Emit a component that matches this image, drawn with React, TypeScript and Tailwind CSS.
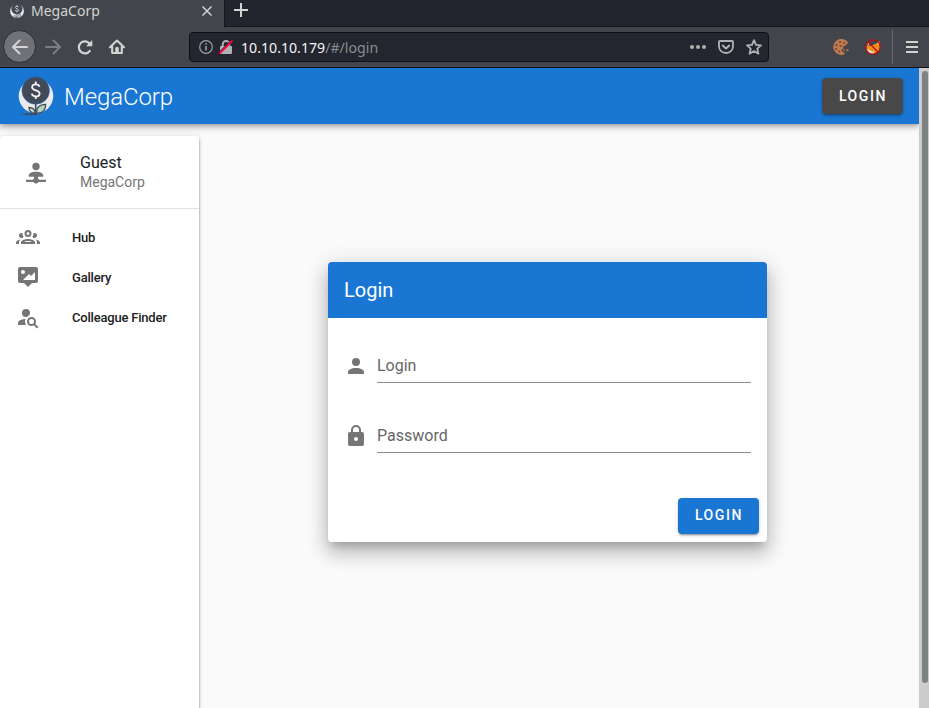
import type { ReactNode } from "react";

const PATHS = {
  account:
    "M12,4A4,4 0 0,1 16,8A4,4 0 0,1 12,12A4,4 0 0,1 8,8A4,4 0 0,1 12,4M12,14C16.42,14 20,15.79 20,18V20H4V18C4,15.79 7.58,14 12,14Z",
  lock: "M12,17A2,2 0 0,0 14,15C14,13.89 13.1,13 12,13A2,2 0 0,0 10,15A2,2 0 0,0 12,17M18,8A2,2 0 0,1 20,10V20A2,2 0 0,1 18,22H6A2,2 0 0,1 4,20V10C4,8.89 4.9,8 6,8H7V6A5,5 0 0,1 12,1A5,5 0 0,1 17,6V8H18M12,3A3,3 0 0,0 9,6V8H15V6A3,3 0 0,0 12,3Z",
  network:
    "M14,15.7V17.6A2.3,2.3 0 0,1 15,18.8H22V21H14.6A3,3 0 0,1 9.4,21H2V18.8H9A2.3,2.3 0 0,1 10,17.6V15.7H4.7V14.5C4.7,12.3 8,10.7 12,10.7C16,10.7 19.3,12.3 19.3,14.5V15.7H14M12,1.8A3.7,3.7 0 0,1 15.7,5.5A3.7,3.7 0 0,1 12,9.2A3.7,3.7 0 0,1 8.3,5.5A3.7,3.7 0 0,1 12,1.8Z",
  group:
    "M12,5A3.5,3.5 0 0,0 8.5,8.5A3.5,3.5 0 0,0 12,12A3.5,3.5 0 0,0 15.5,8.5A3.5,3.5 0 0,0 12,5M12,7A1.5,1.5 0 0,1 13.5,8.5A1.5,1.5 0 0,1 12,10A1.5,1.5 0 0,1 10.5,8.5A1.5,1.5 0 0,1 12,7M5.5,8A2.5,2.5 0 0,0 3,10.5C3,11.44 3.53,12.25 4.29,12.68C4.65,12.88 5.06,13 5.5,13C5.94,13 6.35,12.88 6.71,12.68C7.08,12.47 7.39,12.17 7.62,11.81C6.89,10.86 6.5,9.7 6.5,8.5C6.5,8.41 6.5,8.31 6.5,8.22C6.2,8.08 5.86,8 5.5,8M18.5,8C18.14,8 17.8,8.08 17.5,8.22C17.5,8.31 17.5,8.41 17.5,8.5C17.5,9.7 17.11,10.86 16.38,11.81C16.5,12 16.63,12.15 16.78,12.3C16.94,12.45 17.1,12.58 17.29,12.68C17.65,12.88 18.06,13 18.5,13C18.94,13 19.35,12.88 19.71,12.68C20.47,12.25 21,11.44 21,10.5A2.5,2.5 0 0,0 18.5,8M12,14C9.66,14 5,15.17 5,17.5V19H19V17.5C19,15.17 14.34,14 12,14M4.71,14.55C2.78,14.78 0,15.76 0,17.5V19H3V17.07C3,16.06 3.69,15.22 4.71,14.55M19.29,14.55C20.31,15.22 21,16.06 21,17.07V19H24V17.5C24,15.76 21.22,14.78 19.29,14.55M12,16C13.53,16 15.24,16.5 16.23,17H7.77C8.76,16.5 10.47,16 12,16Z",
  gallery:
    "M4,2H20A2,2 0 0,1 22,4V16A2,2 0 0,1 20,18H16L12,22L8,18H4A2,2 0 0,1 2,16V4A2,2 0 0,1 4,2M19,15V7L15,11L13,9L7,15H19M7,5A2,2 0 0,0 5,7A2,2 0 0,0 7,9A2,2 0 0,0 9,7A2,2 0 0,0 7,5Z",
  search:
    "M10,4A4,4 0 0,1 14,8C14,8.91 13.69,9.75 13.18,10.43C12.32,10.75 11.55,11.26 10.91,11.9L10,12A4,4 0 0,1 6,8A4,4 0 0,1 10,4M2,20V18C2,15.88 5.31,14.14 9.5,14C9.18,14.78 9,15.62 9,16.5C9,17.79 9.38,19 10,20H2M15.5,12C18,12 20,14 20,16.5C20,17.38 19.75,18.21 19.31,18.9L22.39,22L21,23.39L17.88,20.32C17.19,20.75 16.37,21 15.5,21C13,21 11,19 11,16.5C11,14 13,12 15.5,12M15.5,14A2.5,2.5 0 0,0 13,16.5A2.5,2.5 0 0,0 15.5,19A2.5,2.5 0 0,0 18,16.5A2.5,2.5 0 0,0 15.5,14Z",
};

function Mdi({ d }: { d: string }) {
  return (
    <svg className="size-6 shrink-0 fill-[#757575]" viewBox="0 0 24 24">
      <path d={d} />
    </svg>
  );
}

function Logo({ className, page }: { className: string; page?: boolean }) {
  return (
    <svg className={className} viewBox="0 0 36 40">
      <circle cx="18" cy="20" r="17.3" fill="#ebebeb" />
      <circle cx="17.700" cy="14.500" r="13.800" fill="#434a57" stroke={page ? "#1976d2" : "#41444b"} strokeWidth="0.5" />
      <path d="M17.700 28v10M3.500 38.200h1.200M6.500 38.200H18.500" stroke="#434a57" strokeWidth="1.600" fill="none" />
      <path d="M19 37.300c-1.200-5.500 2.500-9 8.700-9 0 5.500-3 9-8.700 9Z" fill="#b4d3c8" stroke="#434a57" strokeWidth="1.300" />
      <path d="M17 37.300c.3-3.500-2-5.800-6-5.800 0 3.500 2.200 5.800 6 5.800Z" fill="#b4d3c8" stroke="#434a57" strokeWidth="1.300" />
      <path
        d="M21.500 10.700c-.4-1.500-1.800-2.400-3.700-2.400-2.200 0-3.700 1.100-3.700 2.900 0 4 7.500 2.200 7.500 6.200 0 1.900-1.600 3-3.800 3-2.300 0-3.700-1-4-2.700M17.700 5.500v2.800M17.700 20v3"
        fill="none"
        stroke="#f4f4f4"
        strokeWidth="1.800"
      />
    </svg>
  );
}

function BrowserChrome() {
  return (
    <div className="flex h-[68px] flex-col border-b border-[#101116] bg-[#42454b] font-['Noto_Sans',sans-serif] text-[#d3d3d1]">
      <div className="flex h-[26px] shrink-0">
        <div className="flex h-[26px] w-[224px] items-center pb-1 pl-[9px]">
          <Logo className="h-4 w-4" />
          <span className="ml-1.5 text-[14px] leading-5">MegaCorp</span>
          <svg className="ml-auto mr-[11px] size-3" viewBox="0 0 12 12" fill="none" stroke="currentColor" strokeWidth="1.500">
            <path d="M1.500 1.500l9 9M10.500 1.500l-9 9" />
          </svg>
        </div>
        <div className="flex h-[27px] flex-1 border-b border-l border-[#15161c] bg-[#23252e] pl-[9px] pt-[3px]">
          <svg className="size-[14px]" viewBox="0 0 14 14" stroke="currentColor" strokeWidth="2">
            <path d="M7 0v14M0 7h14" />
          </svg>
        </div>
      </div>
      <div className="flex h-[41px] items-center pl-[3px]">
        <div className="flex size-[33px] items-center justify-center rounded-full border border-[#2d2f34] bg-[#717277]">
          <svg className="size-4" viewBox="0 0 16 16" fill="none" stroke="currentColor" strokeWidth="2" strokeLinecap="round" strokeLinejoin="round">
            <path d="M15 8H1.500M7.500 1.500L1 8l6.500 6.500" />
          </svg>
        </div>
        <svg className="ml-[9px] size-4 text-[#7c7e81]" viewBox="0 0 16 16" fill="none" stroke="currentColor" strokeWidth="2" strokeLinecap="round" strokeLinejoin="round">
          <path d="M1 8h13.500M8.500 1.500L15 8l-6.500 6.500" />
        </svg>
        <svg className="ml-4 size-4" viewBox="0 0 16 16" fill="none" stroke="currentColor" strokeWidth="2.200" strokeLinecap="round">
          <path d="M12.800 11.800A6 6 0 1 1 12.500 4.500" />
          <path d="M15.300 1v6.300H9z" fill="currentColor" stroke="none" />
        </svg>
        <svg className="ml-4 size-4" viewBox="0 0 16 16">
          <path d="M1 8.300L8 1.500l7 6.800M3.200 7.500V14h9.600V7.500" fill="none" stroke="currentColor" strokeWidth="2.100" strokeLinecap="round" strokeLinejoin="round" />
          <path d="M6.200 9.500a1.800 1.800 0 0 1 3.600 0V14H6.200z" fill="currentColor" />
        </svg>
        <div className="ml-16 flex h-[30px] w-[580px] items-center rounded-[4px] border border-[#0e0f14] bg-[#23252f] pl-[9px] pr-[6px] text-[#b1b1b3]">
          <svg className="size-[14px]" viewBox="0 0 14 14" fill="none" stroke="#a0a0a4">
            <circle cx="7" cy="7" r="6.300" strokeWidth="1.200" />
            <path d="M7 6v4.500M7 3.200v1.600" strokeWidth="1.600" />
          </svg>
          <svg className="ml-[5px] size-4" viewBox="0 0 16 16">
            <path d="M4.700 8V5.200a3.300 3.300 0 0 1 6.600 0V8" fill="none" stroke="#b1b1b3" strokeWidth="2" />
            <rect x="2" y="7" width="12" height="8" rx="1" fill="#b1b1b3" />
            <path d="M1 13.300L13 1.300" stroke="#23252f" strokeWidth="1" />
            <path d="M1.800 14.200L14 2" stroke="#f2003c" strokeWidth="1.900" strokeLinecap="round" />
          </svg>
          <span className="ml-[7px] pt-0.5 text-[14.150px] leading-5 text-[#f4f4f6]">
            10.10.10.179<span className="text-[#8b8c91]">/#/login</span>
          </span>
          <svg className="ml-auto size-4" viewBox="0 0 16 16" fill="currentColor">
            <circle cx="2" cy="8" r="2" />
            <circle cx="8" cy="8" r="2" />
            <circle cx="14" cy="8" r="2" />
          </svg>
          <svg className="ml-3 size-4" viewBox="0 0 16 16" fill="none" stroke="currentColor" strokeWidth="1.800" strokeLinecap="round" strokeLinejoin="round">
            <path d="M2 2h12a1 1 0 0 1 1 1v4.500a7 6.500 0 0 1-14 0V3a1 1 0 0 1 1-1Z" />
            <path d="M4.800 6.500L8 9.500l3.200-3" strokeWidth="2" />
          </svg>
          <svg className="ml-3 size-4" viewBox="0 0 16 16" fill="none" stroke="currentColor" strokeWidth="1.800" strokeLinejoin="round">
            <path d="M8 1.200l2 4.600 5 .5-3.700 3.400 1.100 5L8 12.100l-4.400 2.600 1.100-5L1 6.300l5-.5z" />
          </svg>
        </div>
        <svg className="ml-16 size-4" viewBox="0 0 16 16">
          <path d="M15.500 4.500A8 8 0 1 0 12 15l-1.500-2-1.800-.8.300-2 1.700-1-.7-2 2.500-.5 1-1.700z" fill="#c07850" />
          <g fill="#70402c">
            <circle cx="7" cy="3" r="1" />
            <circle cx="3.500" cy="6" r="1.100" />
            <circle cx="7.500" cy="7" r="1" />
            <circle cx="3.200" cy="10" r=".9" />
            <circle cx="6.300" cy="12.500" r="1" />
            <circle cx="11" cy="4" r=".9" />
          </g>
          <path d="M10.500 10.300h1.500v1.500h-1.500zM13.500 10.300h2v2h-2z" fill="#c8764d" />
        </svg>
        <svg className="ml-4 size-4" viewBox="0 0 16 16">
          <path d="M11.500 4.500L14.500 2l.5 6-1.500 4-5 3-5-1-2.500-4.500 1-3.500 3 1z" fill="#f0901e" />
          <path d="M1.200 10l3 .8 3 2 2-.3-1 2.500-4-1zM2.500 3l2.300 1.500L3 6.500zM13.800 3.200l-1.800 1 1.500 2z" fill="#ece2d4" />
          <circle cx="8" cy="8" r="7.200" fill="none" stroke="#c00810" strokeWidth="1.200" />
          <path d="M3 3l10 10" stroke="#c00810" strokeWidth="1.200" />
        </svg>
        <div className="ml-[11px] h-[34px] w-px bg-[#6a6c70]" />
        <svg className="ml-[13px] h-3 w-3" viewBox="0 0 12 12" stroke="currentColor" strokeWidth="2">
          <path d="M0 1h12M0 6h12M0 11h12" />
        </svg>
      </div>
    </div>
  );
}

function LoginButton({ className }: { className: string }) {
  return (
    <button
      className={`h-9 w-[81px] rounded-[4px] pl-px text-[14px] font-medium tracking-[1.600px] text-white shadow-[0_3px_1px_-2px_rgba(0,0,0,.2),0_2px_2px_0_rgba(0,0,0,.14),0_1px_5px_0_rgba(0,0,0,.12)] ${className}`}
    >
      LOGIN
    </button>
  );
}

function NavItem({ d, children }: { d: string; children: ReactNode }) {
  return (
    <div className="flex h-10 items-center pl-4 text-[13px] font-medium leading-4 tracking-[-0.200px] text-[#212121]">
      <Mdi d={d} />
      <span className="ml-8 pt-0.5">{children}</span>
    </div>
  );
}

function Field({ d, label }: { d: string; label: string }) {
  return (
    <div className="flex h-[33px]">
      <div className="mt-1">
        <Mdi d={d} />
      </div>
      <div className="ml-[9px] flex-1 border-b border-[#8c8c8c] pt-1 text-base leading-6 text-[#666]">{label}</div>
    </div>
  );
}

export default function App() {
  return (
    <div className="flex h-[708px] w-[929px] flex-col overflow-hidden">
      <BrowserChrome />
      <div className="flex h-[640px] font-['Roboto',sans-serif]">
        <div className="flex w-[919px] flex-col overflow-hidden bg-[#fafafa]">
          <header className="z-10 flex h-14 shrink-0 items-center bg-[#1976d2] pl-[18px] pr-4 text-white shadow-[0_2px_4px_-1px_rgba(0,0,0,.2),0_4px_5px_0_rgba(0,0,0,.14),0_1px_10px_0_rgba(0,0,0,.12)]">
            <Logo className="h-10 w-9" page />
            <span className="ml-[10px] pt-0.5 text-2xl font-light leading-8 tracking-[-0.100px]">MegaCorp</span>
            <LoginButton className="ml-auto bg-[#484848] leading-9" />
          </header>
          <div className="flex flex-1">
            <div className="flex w-[200px] bg-[#f7f7f7] pt-3">
              <nav className="w-[199px] rounded-t-[4px] bg-white shadow-[1px_2px_2px_0_rgba(0,0,0,.2),0_1px_5px_0_rgba(0,0,0,.12)]">
                <div className="flex h-[73px] items-center border-b border-[#e0e0e0] pl-6">
                  <div className="pt-0.5">
                    <Mdi d={PATHS.network} />
                  </div>
                  <div className="ml-8 pt-px">
                    <div className="text-base leading-5 text-[#212121]">Guest</div>
                    <div className="text-[14px] leading-[19px] text-[#757575]">MegaCorp</div>
                  </div>
                </div>
                <div className="pt-2">
                  <NavItem d={PATHS.group}>Hub</NavItem>
                  <NavItem d={PATHS.gallery}>Gallery</NavItem>
                  <NavItem d={PATHS.search}>Colleague Finder</NavItem>
                </div>
              </nav>
            </div>
            <main className="flex-1 pl-32 pt-[138px]">
              <div className="h-[280px] w-[439px] rounded-[4px] bg-white shadow-[0_7px_8px_-4px_rgba(0,0,0,.2),0_12px_17px_2px_rgba(0,0,0,.14),0_5px_22px_4px_rgba(0,0,0,.12)]">
                <div className="flex h-14 items-center rounded-t-[4px] bg-[#1976d2] pl-4 text-xl text-white">Login</div>
                <div className="flex flex-col gap-[37px] px-4 pt-8">
                  <Field d={PATHS.account} label="Login" />
                  <Field d={PATHS.lock} label="Password" />
                </div>
                <div className="mt-[45px] flex justify-end pr-2">
                  <LoginButton className="bg-[#1976d2] pb-0.5 leading-[34px]" />
                </div>
              </div>
            </main>
          </div>
        </div>
        <div className="w-[10px] border-l border-[#d0cac5] bg-[#cdcdcd] pl-[2px] pt-[3px]">
          <div className="h-[612px] w-[6px] rounded-full bg-[#7d8382]" />
        </div>
      </div>
    </div>
  );
}
